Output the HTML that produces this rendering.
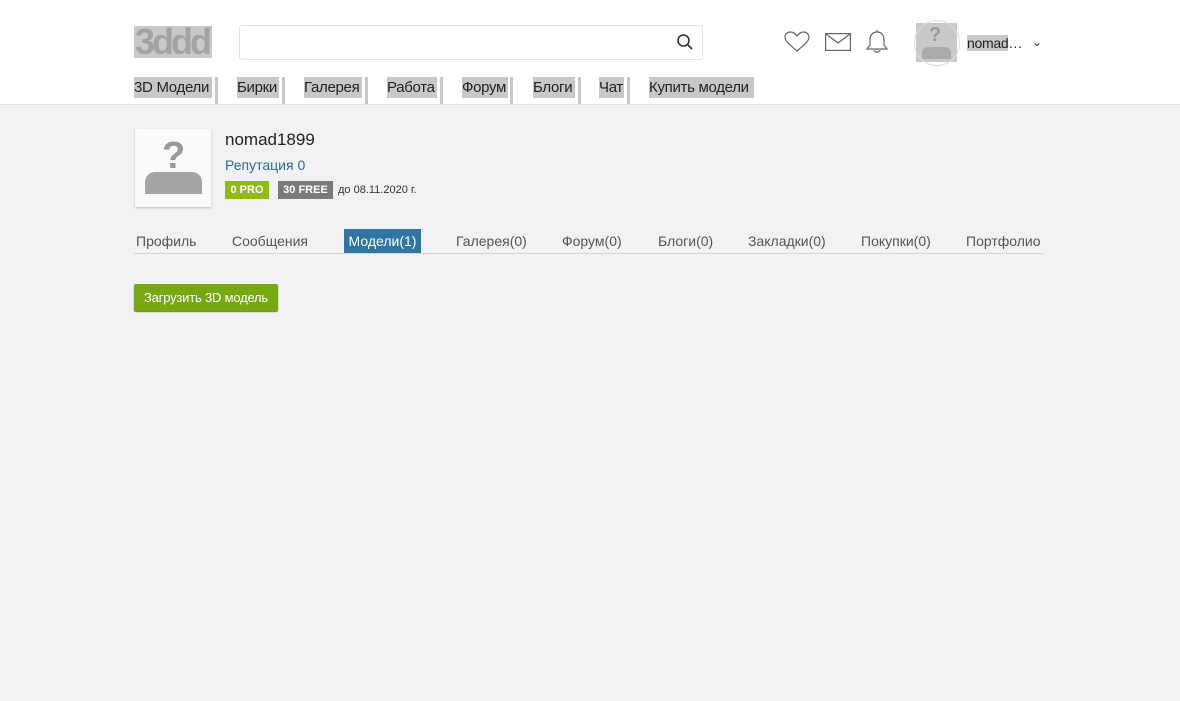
<!DOCTYPE html>
<html><head><meta charset="utf-8"><style>
*{margin:0;padding:0;box-sizing:border-box}
body{width:1180px;height:701px;background:#f2f2f2;font-family:"Liberation Sans",Arial,sans-serif;position:relative;overflow:hidden}
.hdr{position:absolute;left:0;top:0;width:1180px;height:105px;background:#fff;border-bottom:1px solid #e2e2e2}
.a{position:absolute}
.nav{position:absolute;top:77px;height:21px;background:#c8c8c8;color:#222;font-size:15px;line-height:21px;white-space:nowrap;overflow:hidden;letter-spacing:-0.3px}
.bar{position:absolute;top:77px;width:3px;height:27px;background:#c8c8c8}
.tab{position:absolute;top:233px;font-size:14px;color:#555;white-space:nowrap}
</style></head><body>
<div class="hdr">
  <div class="a" style="left:134px;top:26px;width:78px;height:32px;background:#c9c9c9;overflow:hidden">
    <div style="position:absolute;left:1px;top:-4px;font-size:36px;font-weight:bold;color:#a3a3a3;letter-spacing:-3px;line-height:40px">3ddd</div>
  </div>
  <div class="a" style="left:239px;top:25px;width:464px;height:35px;border:1px solid #e3e3e3;border-radius:3px;background:#fff"></div>
  <svg class="a" style="left:676px;top:33px" width="18" height="18" viewBox="0 0 18 18"><circle cx="7.5" cy="7.5" r="5.5" fill="none" stroke="#333" stroke-width="1.6"/><line x1="11.5" y1="11.5" x2="16" y2="16" stroke="#333" stroke-width="1.8"/></svg>
  <svg class="a" style="left:784px;top:31px" width="26" height="22" viewBox="0 0 26 22"><path d="M13 20 C5 13 1 10 1 6 C1 3 3.5 1 6.5 1 C9.5 1 11.5 3 13 5 C14.5 3 16.5 1 19.5 1 C22.5 1 25 3 25 6 C25 10 21 13 13 20Z" fill="none" stroke="#666" stroke-width="1.2"/></svg>
  <svg class="a" style="left:825px;top:33px" width="26" height="18" viewBox="0 0 26 18"><rect x="0.6" y="0.6" width="24.8" height="16.8" fill="none" stroke="#666" stroke-width="1.2"/><path d="M1 1 L13 10 L25 1" fill="none" stroke="#666" stroke-width="1.2"/></svg>
  <svg class="a" style="left:865px;top:30px" width="24" height="25" viewBox="0 0 24 25"><path d="M12 2 C7 2 5 6 5 10 L5 15 L2 19 L22 19 L19 15 L19 10 C19 6 17 2 12 2Z" fill="none" stroke="#666" stroke-width="1.2"/><path d="M9 20 C9 23 15 23 15 20" fill="none" stroke="#666" stroke-width="1.2"/><line x1="12" y1="0" x2="12" y2="2" stroke="#666" stroke-width="1.2"/></svg>
  <div class="a" style="left:916px;top:23px;width:41px;height:39px;background:#c9c9c9"></div>
  <div class="a" style="left:914px;top:20px;width:46px;height:46px;border:1px solid #ddd;border-radius:50%"></div>
  <div class="a" style="left:929px;top:24px;font-size:20px;color:#999;font-weight:bold">?</div>
  <div class="a" style="left:922px;top:47px;width:29px;height:12px;background:#aaa;border-radius:6px 6px 0 0"></div>
  <div class="a" style="left:967px;top:35px;height:17px;width:60px;font-size:14px;line-height:17px;color:#222;letter-spacing:-0.3px"><span style="background:#c8c8c8">nomad</span>…</div>
  <div class="a" style="left:1032px;top:35px;font-size:12px;color:#333">⌄</div>
  <div class="nav" style="left:134px;width:78px">3D Модели</div><div class="bar" style="left:215px"></div>
  <div class="nav" style="left:237px;width:42px">Бирки</div><div class="bar" style="left:282px"></div>
  <div class="nav" style="left:304px;width:58px">Галерея</div><div class="bar" style="left:365px"></div>
  <div class="nav" style="left:387px;width:50px">Работа</div><div class="bar" style="left:440px"></div>
  <div class="nav" style="left:462px;width:46px">Форум</div><div class="bar" style="left:510px"></div>
  <div class="nav" style="left:533px;width:42px">Блоги</div><div class="bar" style="left:578px"></div>
  <div class="nav" style="left:599px;width:25px">Чат</div><div class="bar" style="left:627px"></div>
  <div class="nav" style="left:649px;width:105px">Купить модели</div>
</div>
<div class="a" style="left:135px;top:129px;width:76px;height:78px;background:#fafafa;box-shadow:0 1px 2px #bbb"></div>
<div class="a" style="left:162px;top:136px;font-size:38px;font-weight:bold;color:#9a9a9a;line-height:40px">?</div>
<div class="a" style="left:145px;top:172px;width:57px;height:22px;background:#a5a5a5;border-radius:10px 10px 0 0"></div>
<div class="a" style="left:225px;top:130px;font-size:17px;color:#222">nomad1899</div>
<div class="a" style="left:225px;top:157px;font-size:14px;color:#2f6b94">Репутация 0</div>
<div class="a" style="left:225px;top:181px;width:44px;height:18px;background:#8fbc12;color:#fff;font-size:11px;font-weight:bold;line-height:18px;text-align:center">0 PRO</div>
<div class="a" style="left:278px;top:181px;width:55px;height:18px;background:#7a7a7a;color:#fff;font-size:11px;font-weight:bold;line-height:18px;text-align:center">30 FREE</div>
<div class="a" style="left:338px;top:184px;font-size:11px;color:#333">до 08.11.2020 г.</div>
<div class="a" style="left:134px;top:253px;width:909px;height:1px;background:#d5d5d5"></div>
<div class="tab" style="left:136px">Профиль</div>
<div class="tab" style="left:232px">Сообщения</div>
<div class="a" style="left:344px;top:229px;width:77px;height:24px;background:#2f76a3;color:#fff;font-size:14px;line-height:24px;text-align:center">Модели(1)</div>
<div class="tab" style="left:456px">Галерея(0)</div>
<div class="tab" style="left:562px">Форум(0)</div>
<div class="tab" style="left:658px">Блоги(0)</div>
<div class="tab" style="left:748px">Закладки(0)</div>
<div class="tab" style="left:861px">Покупки(0)</div>
<div class="tab" style="left:966px">Портфолио</div>
<div class="a" style="left:134px;top:284px;width:144px;height:27px;background:#76a90f;border-radius:2px;box-shadow:0 1px 1px #5a8a00;color:#fff;font-size:13px;line-height:27px;text-align:center;letter-spacing:-0.2px">Загрузить 3D модель</div>
</body></html>
